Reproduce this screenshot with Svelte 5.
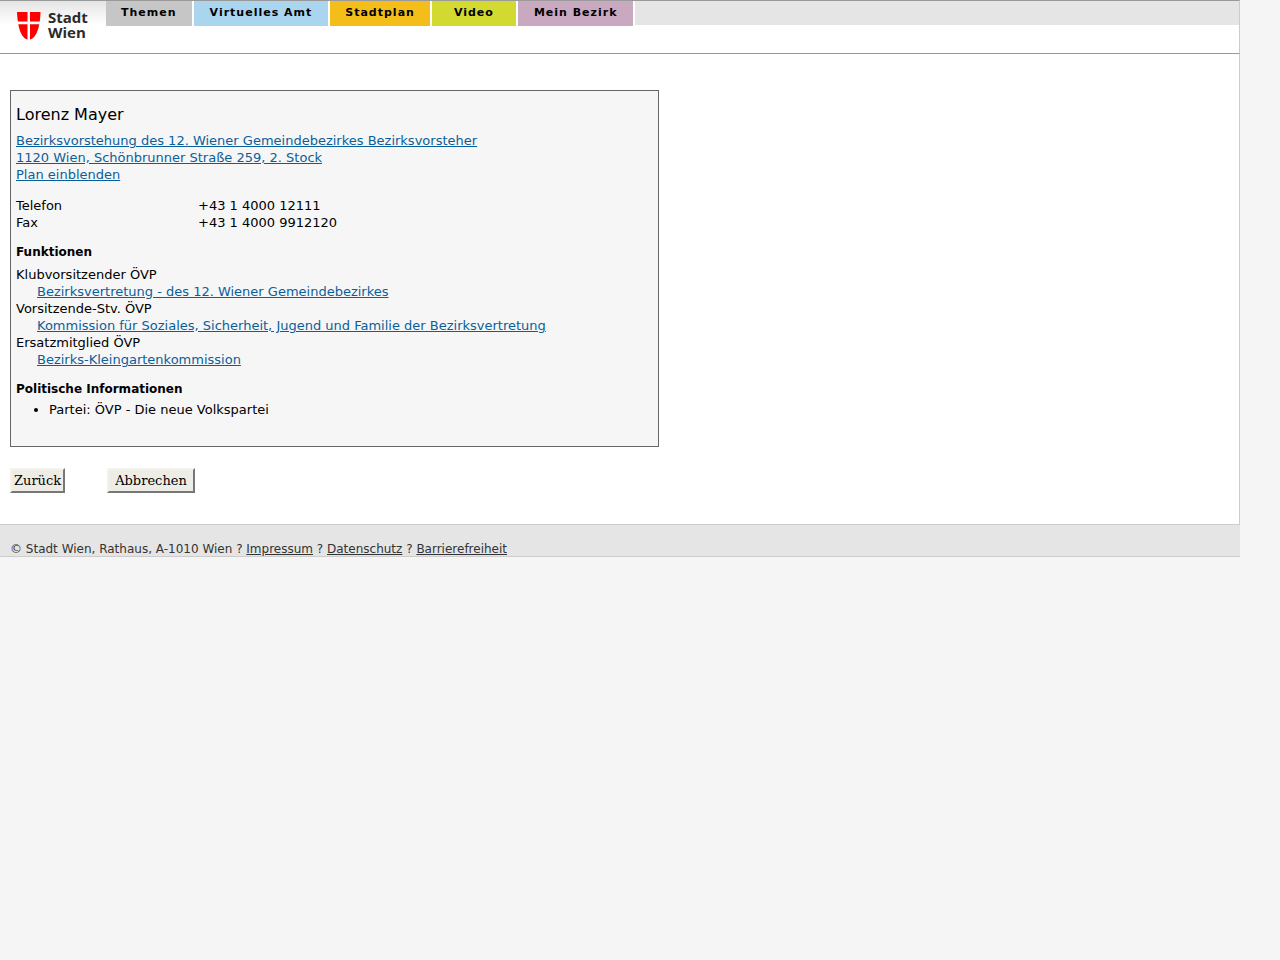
<script>

  const tabs = [
    { label: "Themen", name: "themen" },
    { label: "Virtuelles Amt", name: "amt" },
    { label: "Stadtplan", name: "stadtplan" },
    { label: "Video", name: "video" },
    { label: "Mein Bezirk", name: "bezirk" },
  ]

  const phones = [
    { label: "Telefon", number: "+43 1 4000 12111" },
    { label: "Fax", number: "+43 1 4000 9912120" },
  ]

  const functions = [
    { role: "Klubvorsitzender ÖVP", place: "Bezirksvertretung - des 12. Wiener Gemeindebezirkes" },
    { role: "Vorsitzende-Stv. ÖVP", place: "Kommission für Soziales, Sicherheit, Jugend und Familie der Bezirksvertretung" },
    { role: "Ersatzmitglied ÖVP", place: "Bezirks-Kleingartenkommission" },
  ]

</script>

<div class="page">

  <header class="header">
    <a class="logo" href="#start">
      <svg width="24" height="28" viewBox="0 0 24 28" aria-hidden="true">
        <path fill="#ff0000" d="M0 0H10.500V9.500H.9C.4 6.500 .2 3.500 0 0ZM13 0H23.500C23.400 3.500 23.200 6.500 22.700 9.500H13ZM1.300 12.200H10.500V27.500C6 26.500 3 21 1.300 12.200ZM13 12.200H22.300C20.500 21 17.500 26.500 13 27.500Z" />
      </svg>
      <span class="logo-text">Stadt<br />Wien</span>
    </a>

    <nav class="tabs">
      {#each tabs as tab}
        <a class="tab {tab.name}" href="#{tab.name}">{tab.label}</a>
      {/each}
      <div class="tab-rest"></div>
    </nav>
  </header>

  <main class="content">

    <section class="card">
      <h1>Lorenz Mayer</h1>

      <address>
        <a href="#vorstehung">Bezirksvorstehung des 12. Wiener Gemeindebezirkes Bezirksvorsteher</a><br />
        <a href="#adresse">1120 Wien, Schönbrunner Straße 259, 2. Stock</a><br />
        <a href="#plan">Plan einblenden</a>
      </address>

      <table class="phones">
        <tbody>
          {#each phones as phone}
            <tr>
              <th scope="row">{phone.label}</th>
              <td>{phone.number}</td>
            </tr>
          {/each}
        </tbody>
      </table>

      <h2>Funktionen</h2>
      <dl>
        {#each functions as item}
          <dt>{item.role}</dt>
          <dd><a href="#gremium">{item.place}</a></dd>
        {/each}
      </dl>

      <h2>Politische Informationen</h2>
      <ul>
        <li>Partei: ÖVP - Die neue Volkspartei</li>
      </ul>
    </section>

    <div class="button-container">
      <button class="back" type="button">Zurück</button>
      <button class="cancel" type="button">Abbrechen</button>
    </div>

  </main>

  <footer class="footer">
    © Stadt Wien, Rathaus, A-1010 Wien ?
    <a href="#impressum">Impressum</a> ?
    <a href="#datenschutz">Datenschutz</a> ?
    <a href="#barrierefreiheit">Barrierefreiheit</a>
  </footer>

</div>


<style>

  :global(body) {
    margin: 0;
    background-color: #f5f5f5;
  }

  .page {
    margin-right: 40px;
    font-family: "DejaVu Sans", sans-serif;
    font-size: 13px;
    line-height: 17px;
    color: #000;
  }

  .header {
    display: flex;
    align-items: flex-start;
    height: 52px;
    border-top: 1px solid #999;
    border-bottom: 1px solid #999;
    border-right: 1px solid #ccc;
    background-color: white;
  }

  .logo {
    display: flex;
    box-sizing: border-box;
    flex: none;
    gap: 7px;
    width: 106px;
    height: 52px;
    padding: 11px 0 0 17px;
    background: linear-gradient(#e5e5e5, #fff 24px);
    color: #2b2b2b;
    text-decoration: none;
  }

  .logo-text {
    margin-top: -2px;
    font-family: "Open Sans", "Noto Sans", sans-serif;
    font-size: 15px;
    font-weight: 700;
    line-height: 15px;
  }

  .tabs {
    display: flex;
    flex: 1;
    align-items: flex-start;
    gap: 2px;
  }

  .tab {
    height: 25px;
    padding: 0 16px;
    font-size: 11px;
    font-weight: bold;
    line-height: 23px;
    letter-spacing: 1px;
    color: #000;
    text-decoration: none;
  }

  .themen {
    padding: 0 15px;
    background-color: #c6c6c6;
  }

  .amt {
    background-color: #a9d5ef;
  }

  .stadtplan {
    padding: 0 15px;
    background-color: #f3be19;
  }

  .video {
    padding: 0 22px;
    background-color: #d2d930;
  }

  .bezirk {
    background-color: #c8a9c0;
  }

  .tab-rest {
    flex: 1;
    height: 24px;
    background-color: #e5e5e5;
  }

  .content {
    padding: 36px 10px 31px;
    border-right: 1px solid #ccc;
    background-color: white;
  }

  .card {
    box-sizing: border-box;
    max-width: 649px;
    padding: 14px 5px 28px;
    border: 1px solid #666;
    background-color: #f6f6f6;
  }

  h1 {
    margin: 0 0 8px;
    font-size: 16px;
    font-weight: normal;
    line-height: 19px;
  }

  address {
    font-style: normal;
  }

  .card a {
    color: #0a5f9b;
  }

  .phones {
    margin: 14px 0 13px;
    border-collapse: collapse;
  }

  .phones th {
    width: 182px;
    padding: 0;
    font-weight: normal;
    text-align: left;
  }

  .phones td {
    padding: 0;
  }

  h2 {
    margin: 0;
    font-size: 12px;
    line-height: 16px;
  }

  dl {
    margin: 6px 0 13px;
  }

  dd {
    margin: 0 0 0 21px;
  }

  ul {
    margin: 4px 0 0;
    padding-left: 33px;
  }

  .button-container {
    display: flex;
    gap: 42px;
    margin-top: 21px;
  }

  button {
    height: 25px;
    padding: 0 6px;
    border: 2px solid;
    border-color: #f3f2ec #77767a #77767a #f3f2ec;
    background-color: #eeede5;
    font-family: "DejaVu Serif", serif;
    font-size: 13px;
    color: #000;
  }

  .back {
    padding: 0 2px;
  }

  .footer {
    padding: 17px 10px 0;
    border-top: 1px solid #ccc;
    border-bottom: 1px solid #ccc;
    background-color: #e5e5e5;
    font-size: 12px;
    line-height: 14px;
    color: #333;
  }

  .footer a {
    color: #333;
  }

</style>
